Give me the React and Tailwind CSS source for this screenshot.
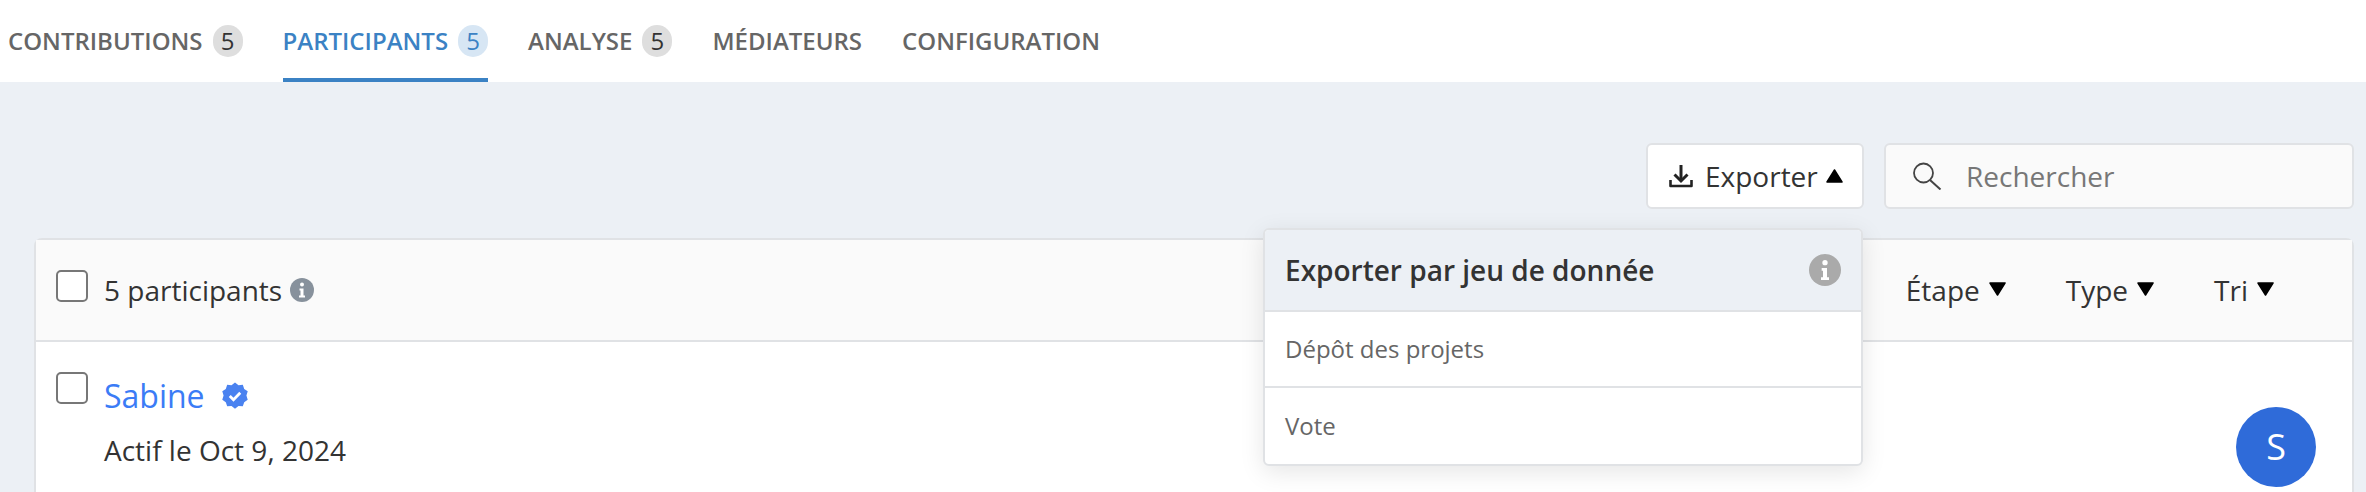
import React from "react";

const Caret = ({ up, w = 17 }) => (
  <svg width={w} height="14" viewBox="0 0 17 14" preserveAspectRatio="none" className="shrink-0">
    <path
      d={up ? "M8.5 1 L16 13 L1 13 Z" : "M8.5 13 L16 1 L1 1 Z"}
      fill="#000"
      stroke="#000"
      strokeWidth="1.5"
      strokeLinejoin="round"
    />
  </svg>
);

const Info = ({ size, color }) => (
  <svg width={size} height={size} viewBox="0 0 24 24" className="shrink-0">
    <circle cx="12" cy="12" r="12" fill={color} />
    <circle cx="12" cy="6.5" r="2" fill="#fff" />
    <path d="M9.5 10.5h4v7h1.5v2H9v-2h1.5v-5h-1z" fill="#fff" />
  </svg>
);

const Tab = ({ label, count, active }) => (
  <div
    className={`flex h-full items-center gap-[10px] border-b-4 pt-[4px] ${
      active ? "border-[#3b82c4] text-[#3b82c4]" : "border-transparent text-[#666]"
    }`}
  >
    <span className="text-[24px] font-semibold leading-none">{label}</span>
    {count ? (
      <span
        className={`flex h-[32px] w-[30px] items-center justify-center rounded-full text-[24px] font-normal ${
          active ? "bg-[#d7e6f4] text-[#3b82c4]" : "bg-[#dedede] text-[#333]"
        }`}
      >
        {count}
      </span>
    ) : null}
  </div>
);

const Filter = ({ label }) => (
  <div className="flex items-center gap-[9px] text-[28px] text-[#333]">
    <span>{label}</span>
    <span className="mb-[2px]">
      <Caret />
    </span>
  </div>
);

const Checkbox = ({ className = "" }) => (
  <div className={`h-[32px] w-[32px] shrink-0 rounded-[5px] border-2 border-[#777] bg-white ${className}`} />
);

export default function App() {
  return (
    <div className="h-[492px] w-[2366px] overflow-hidden bg-[#ecf0f5] font-['Open_Sans',sans-serif]">
      <div className="flex h-[82px] items-stretch gap-[40px] bg-white pl-[8px]">
        <Tab label="CONTRIBUTIONS" count="5" />
        <Tab label="PARTICIPANTS" count="5" active />
        <Tab label="ANALYSE" count="5" />
        <Tab label="MÉDIATEURS" />
        <Tab label="CONFIGURATION" />
      </div>
      <div className="flex flex-col gap-[29px] pl-[34px] pr-[12px] pt-[61px]">
        <div className="flex justify-end gap-[20px]">
          <div className="flex h-[66px] w-[218px] items-center rounded-[6px] border-2 border-[#e0e2e5] bg-white pl-[21px] text-[28px] text-[#333]">
            <svg width="24" height="24" viewBox="0 0 24 24" className="shrink-0">
              <path d="M12 1v15" stroke="#222" strokeWidth="3" fill="none" />
              <path d="M5.5 10.5L12 17l6.5-6.5" stroke="#222" strokeWidth="3" fill="none" />
              <path d="M1.5 16v6h21v-6" stroke="#222" strokeWidth="2.6" fill="none" strokeLinejoin="round" />
            </svg>
            <span className="ml-[12px]">Exporter</span>
            <span className="ml-[8px]">
              <Caret up w={17} />
            </span>
          </div>
          <div className="flex h-[66px] w-[470px] items-center rounded-[6px] border-2 border-[#e0e2e5] bg-[#fafafa] pl-[26px] text-[28px] text-[#777]">
            <svg width="30" height="28" viewBox="0 0 30 28" className="shrink-0">
              <circle cx="11.5" cy="11" r="9.5" stroke="#444" strokeWidth="1.8" fill="none" />
              <path d="M18 18l10.5 9.5" stroke="#444" strokeWidth="2" fill="none" />
            </svg>
            <span className="ml-[24px]">Rechercher</span>
          </div>
        </div>
        <div className="relative rounded-t-[8px] border-2 border-b-0 border-[#e0e2e5] bg-white">
          <div className="flex h-[102px] items-center border-b-2 border-[#e0e2e5] bg-[#fafafa] pl-[20px] pr-[78px]">
            <Checkbox className="mb-[8px]" />
            <span className="ml-[16px] text-[28px] text-[#333]">5 participants</span>
            <span className="ml-[8px]">
              <Info size={24} color="#87919c" />
            </span>
            <div className="ml-auto flex items-center gap-[60px]">
              <Filter label="Étape" />
              <Filter label="Type" />
              <Filter label="Tri" />
            </div>
          </div>
          <div className="h-[200px] pl-[20px] pr-[36px] pt-[30px]">
            <div className="flex items-start">
              <Checkbox />
              <div className="ml-[16px] flex flex-col">
                <div className="flex items-center gap-[16px]">
                  <span className="text-[32px] leading-[48px] text-[#3b7cf6]">Sabine</span>
                  <svg width="28" height="28" viewBox="0 0 24 24">
                    <path
                      d="M12 0.5l3 2.2 3.7-.3 1.2 3.5 3 2.1-1.1 3.6 1.1 3.6-3 2.1-1.2 3.5-3.7-.3-3 2.4-3-2.4-3.7.3-1.2-3.5-3-2.1 1.1-3.6-1.1-3.6 3-2.1 1.2-3.5 3.7.3z"
                      fill="#4a82f0"
                    />
                    <path d="M7.5 12l3.2 3.2 5.8-6" fill="none" stroke="#fff" strokeWidth="2.4" />
                  </svg>
                </div>
                <span className="mt-[6px] text-[28px] leading-[48px] text-[#333]">Actif le Oct 9, 2024</span>
              </div>
              <div className="ml-auto mt-[35px] flex h-[80px] w-[80px] items-center justify-center rounded-full bg-[#2f6bd9] text-[36px] text-white">
                S
              </div>
            </div>
          </div>
          <div className="absolute left-[1227px] top-[-12px] w-[600px] overflow-hidden rounded-[6px] border-2 border-[#e0e2e5] bg-white shadow-[0_6px_24px_rgba(0,0,0,0.1)]">
            <div className="flex h-[82px] items-center justify-between border-b-2 border-[#e0e2e5] bg-[#ecf0f5] pl-[20px] pr-[20px]">
              <span className="text-[28px] font-semibold text-[#333]">Exporter par jeu de donnée</span>
              <Info size={32} color="#aaaaaa" />
            </div>
            <div className="flex h-[76px] items-center border-b-2 border-[#e0e2e5] pl-[20px] text-[24px] text-[#666]">
              Dépôt des projets
            </div>
            <div className="flex h-[76px] items-center pl-[20px] text-[24px] text-[#666]">Vote</div>
          </div>
        </div>
      </div>
    </div>
  );
}
